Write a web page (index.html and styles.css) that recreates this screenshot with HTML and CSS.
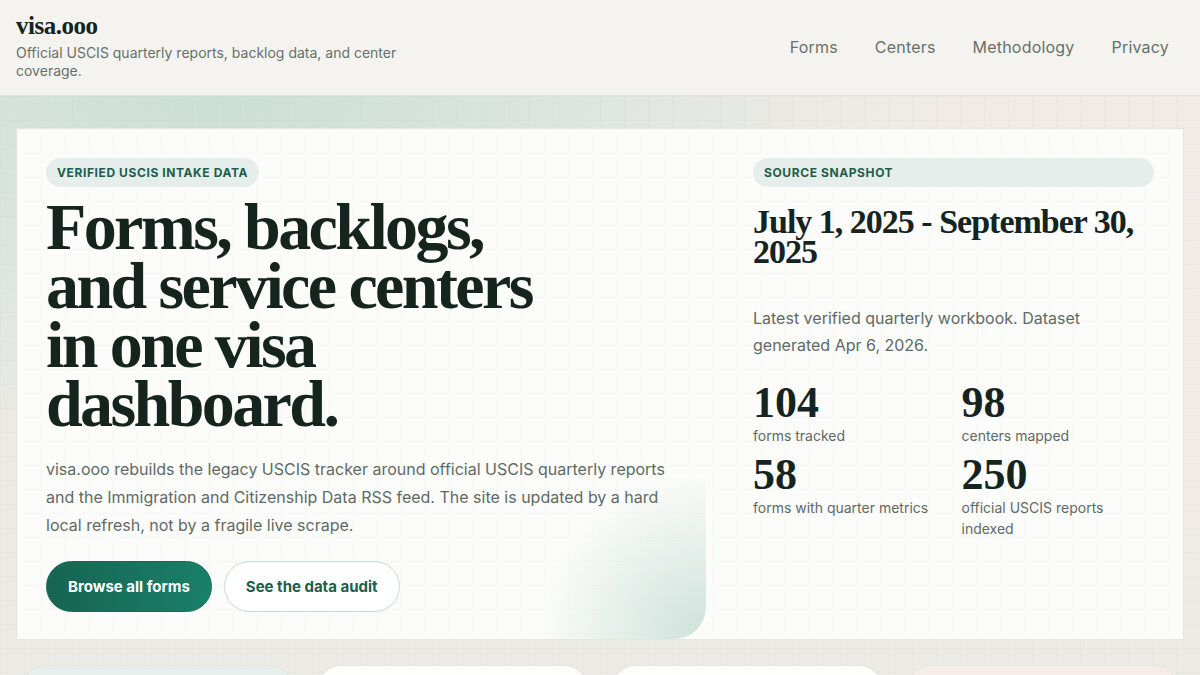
FILE: index.html
```html
<!DOCTYPE html>
<html lang="en">
<head>
  <meta charset="UTF-8">
  <meta name="viewport" content="width=device-width, initial-scale=1.0">
  <title>visa.ooo</title>
  <link rel="stylesheet" href="styles.css">
</head>
<body>

  <header class="site-header">
    <div class="brand">
      <a class="logo" href="#">visa.ooo</a>
      <p class="tagline">Official USCIS quarterly reports, backlog data, and center coverage.</p>
    </div>
    <nav class="nav">
      <a href="#">Forms</a>
      <a href="#">Centers</a>
      <a href="#">Methodology</a>
      <a href="#">Privacy</a>
    </nav>
  </header>

  <main class="page">
    <!-- Hero -->
    <section class="hero">
      <div class="hero-main">
        <span class="pill">Verified USCIS intake data</span>
        <h1>Forms, backlogs, and service centers in one visa dashboard.</h1>
        <p class="lead">visa.ooo rebuilds the legacy USCIS tracker around official USCIS quarterly reports and the Immigration and Citizenship Data RSS feed. The site is updated by a hard local refresh, not by a fragile live scrape.</p>
        <div class="actions">
          <a class="btn btn-primary" href="#">Browse all forms</a>
          <a class="btn btn-ghost" href="#">See the data audit</a>
        </div>
      </div>

      <aside class="snapshot">
        <span class="pill pill-wide">Source snapshot</span>
        <h2>July 1, 2025 - September 30, 2025</h2>
        <p class="snapshot-note">Latest verified quarterly workbook. Dataset generated Apr 6, 2026.</p>
        <div class="stats">
          <div class="stat"><strong>104</strong><span>forms tracked</span></div>
          <div class="stat"><strong>98</strong><span>centers mapped</span></div>
          <div class="stat"><strong>58</strong><span>forms with quarter metrics</span></div>
          <div class="stat"><strong>250</strong><span>official USCIS reports indexed</span></div>
        </div>
      </aside>
    </section>

    <!-- Summary cards -->
    <section class="cards">
      <div class="card card-teal"></div>
      <div class="card"></div>
      <div class="card"></div>
      <div class="card card-rose"></div>
    </section>
  </main>

</body>
</html>
```

FILE: styles.css
```css
html,
body {
  height: 100%;
  overflow: hidden;
}

body {
  margin: 0;
  font-family: Inter, "Noto Sans", sans-serif;
  color: #16241f;
  background-color: #eceae5;
  background-image:
    linear-gradient(rgba(20, 60, 50, 0.018) 1px, transparent 1px),
    linear-gradient(90deg, rgba(20, 60, 50, 0.018) 1px, transparent 1px),
    radial-gradient(ellipse at 18% 12%, rgba(200, 222, 214, 0.95), rgba(200, 222, 214, 0) 45%),
    radial-gradient(circle at 95% 40%, rgba(246, 236, 232, 0.6), rgba(246, 236, 232, 0) 40%);
  background-size: 24px 24px, 24px 24px, auto, auto;
}

a {
  text-decoration: none;
  color: inherit;
}

.site-header {
  display: flex;
  justify-content: space-between;
  align-items: flex-start;
  padding: 12px 16px 16px;
  height: 67px;
  background-color: #f4f3ef;
  border-bottom: 1px solid #e2e2dc;
}

.logo {
  font-family: "Liberation Serif", serif;
  font-weight: 700;
  font-size: 25px;
  letter-spacing: -0.5px;
  color: #16241f;
}

.tagline {
  margin: 4px 0 0;
  max-width: 400px;
  font-size: 14px;
  line-height: 18px;
  color: #66716c;
}

.nav {
  display: flex;
  gap: 37px;
  margin-top: 25px;
  margin-right: 15px;
}

.nav a {
  font-size: 16px;
  letter-spacing: 0.2px;
  color: #66716c;
}

.page {
  padding: 32px 16px 0;
}

/* hero card with a faint grid */
.hero {
  position: relative;
  display: grid;
  grid-template-columns: 1fr 401px;
  gap: 48px;
  padding: 29px;
  height: 452px;
  background-color: #fcfcfa;
  background-image:
    linear-gradient(rgba(20, 60, 50, 0.018) 1px, transparent 1px),
    linear-gradient(90deg, rgba(20, 60, 50, 0.018) 1px, transparent 1px);
  background-size: 24px 24px;
  border: 1px solid #e4e6e1;
}

.hero::after {
  content: "";
  position: absolute;
  left: 530px;
  top: 350px;
  width: 159px;
  height: 160px;
  border-radius: 0 0 32px 0;
  background: radial-gradient(ellipse at 100% 100%, rgba(200, 222, 215, 0.9), rgba(200, 222, 215, 0) 75%);
  pointer-events: none;
}

.hero-main,
.snapshot {
  position: relative;
  z-index: 1;
}

.pill {
  display: inline-block;
  padding: 8px 11px;
  border-radius: 999px;
  background-color: #e6eeeb;
  color: #1c5e4b;
  font-size: 12px;
  font-weight: 700;
  letter-spacing: 0.6px;
  line-height: 13px;
  text-transform: uppercase;
}

.pill-wide {
  display: block;
}

h1 {
  margin: 10px 0 0;
  max-width: 540px;
  font-family: "Liberation Serif", serif;
  font-weight: 700;
  font-size: 66px;
  line-height: 59px;
  letter-spacing: -2.6px;
  color: #16241f;
}

.lead {
  margin: 22px 0 0;
  max-width: 640px;
  font-size: 16px;
  line-height: 28px;
  color: #5e6a65;
}

.actions {
  display: flex;
  gap: 12px;
  margin-top: 22px;
}

.btn {
  display: inline-flex;
  align-items: center;
  height: 49px;
  padding: 0 21px;
  border-radius: 999px;
  font-size: 15px;
  font-weight: 700;
}

.btn-primary {
  color: #fff;
  background: linear-gradient(90deg, #166451, #1a8069);
  border: 1px solid #176b57;
}

.btn-ghost {
  color: #1c5e4b;
  background-color: #fff;
  border: 1px solid #c6dbd4;
}

.snapshot h2 {
  margin: 20px 0 0;
  font-family: "Liberation Serif", serif;
  font-weight: 700;
  font-size: 34px;
  line-height: 30px;
  letter-spacing: -1px;
  color: #16241f;
}

.snapshot-note {
  margin: 38px 0 0;
  font-size: 16px;
  line-height: 27px;
  color: #5e6a65;
}

.stats {
  display: grid;
  grid-template-columns: 1fr 1fr;
  column-gap: 16px;
  row-gap: 7px;
  margin-top: 22px;
}

.stat strong {
  display: block;
  font-family: "Liberation Serif", serif;
  font-weight: 700;
  font-size: 44px;
  line-height: 44px;
  color: #16241f;
}

.stat span {
  display: block;
  font-size: 14px;
  line-height: 21px;
  color: #5e6a65;
}

.cards {
  display: grid;
  grid-template-columns: repeat(4, 1fr);
  gap: 24px;
  margin: 25px 6px 0;
}

.card {
  height: 120px;
  border-radius: 24px;
  background-color: #fdfdfb;
  border: 1px solid #e6e7e2;
}

.card-teal {
  background-color: #e7efec;
}

.card-rose {
  background-color: #f6ece8;
}
```
